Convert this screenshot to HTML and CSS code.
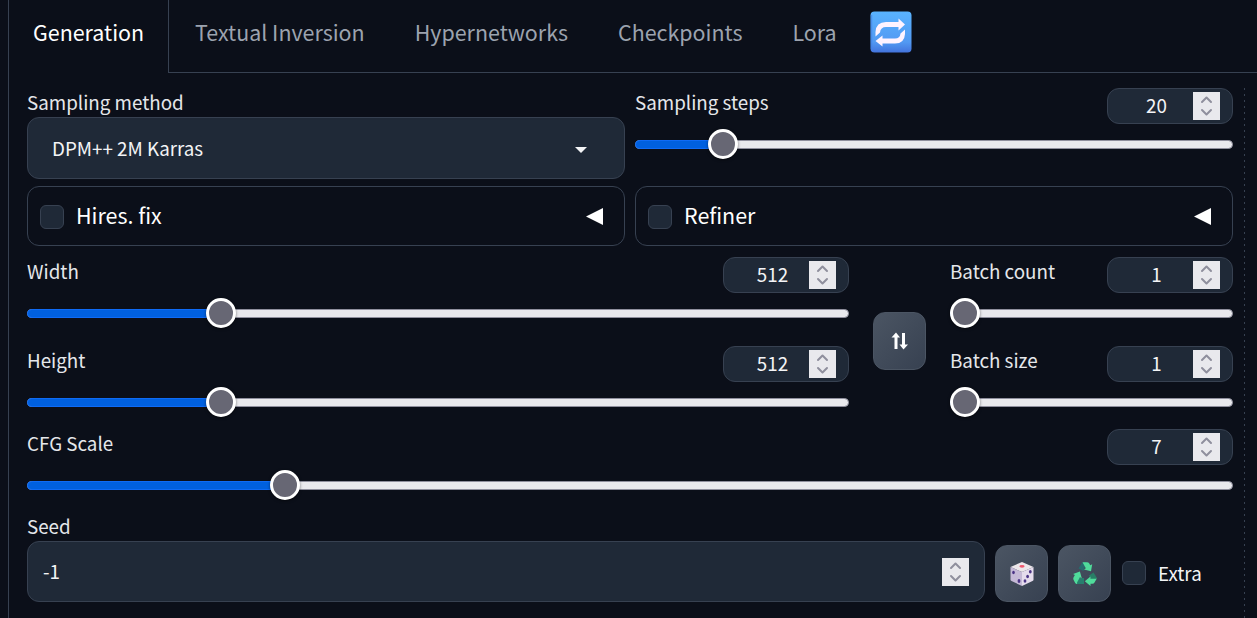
FILE: index.html
```
<!DOCTYPE html>
<html lang="en">
<head>
<meta charset="utf-8">
<title>Generation</title>
<link rel="stylesheet" href="styles.css">
</head>
<body>
<svg class="defs" width="0" height="0">
  <symbol id="spin" viewBox="0 0 27 28">
    <path d="M9 10l4.500-4.500L18 10M9 18l4.500 4.500L18 18" fill="none" stroke="#8f8f9d" stroke-width="2" stroke-linecap="round" stroke-linejoin="round"/>
  </symbol>
</svg>
<main class="page">
  <nav class="tabs">
    <span class="tab active">Generation</span>
    <div class="tab-rest">
      <span class="tab">Textual Inversion</span>
      <span class="tab">Hypernetworks</span>
      <span class="tab">Checkpoints</span>
      <span class="tab">Lora</span>
      <svg class="refresh" viewBox="0 0 42 42">
        <defs><linearGradient id="rb" x1="0" y1="0" x2="0" y2="1"><stop offset="0" stop-color="#59b3ff"/><stop offset=".75" stop-color="#5299f2"/><stop offset="1" stop-color="#4373dd"/></linearGradient></defs>
        <rect x=".5" y=".5" width="41" height="41" rx="4" fill="url(#rb)"/>
        <path d="M1.500 4v34" stroke="#4280e4" stroke-width="1.500" opacity=".6"/>
        <path d="M5.500 25.500V21Q6 11 16 11H28.500V7.500L35 13.500L28.500 19.500V16H16Q10.500 16 10 21.500Z" fill="#fff3ff"/>
        <path d="M35 18.500V23Q34.500 32.500 25 32.500H12.500V35.500L5.500 30L12.500 24.500V27.500H25Q30 27.500 30.500 22.500Z" fill="#fff3ff"/>
      </svg>
    </div>
  </nav>

  <div class="panel">
    <section class="settings">
      <div class="pair">
        <div class="field">
          <label class="label">Sampling method</label>
          <div class="select">
            <span>DPM++ 2M Karras</span>
            <svg class="caret" viewBox="0 0 12 6"><path d="M0 0h12l-6 6z" fill="#f3f4f6"/></svg>
          </div>
        </div>
        <div class="slider" style="--v:.1285">
          <div class="head"><label class="label">Sampling steps</label><div class="num"><span>20</span><svg class="spin"><use href="#spin"/></svg></div></div>
          <div class="track"><i class="fill"></i><i class="thumb"></i></div>
        </div>
      </div>

      <div class="pair accordions">
        <div class="accordion"><i class="check"></i><span>Hires. fix</span><svg class="arrow" viewBox="0 0 17 17"><path d="M17 0v17L0 8.500z" fill="#fff"/></svg></div>
        <div class="accordion"><i class="check"></i><span>Refiner</span><svg class="arrow" viewBox="0 0 17 17"><path d="M17 0v17L0 8.500z" fill="#fff"/></svg></div>
      </div>

      <div class="sizes">
        <div class="stack">
          <div class="slider" style="--v:.2258">
            <div class="head"><label class="label">Width</label><div class="num"><span>512</span><svg class="spin"><use href="#spin"/></svg></div></div>
            <div class="track"><i class="fill"></i><i class="thumb"></i></div>
          </div>
          <div class="slider" style="--v:.2258">
            <div class="head"><label class="label">Height</label><div class="num"><span>512</span><svg class="spin"><use href="#spin"/></svg></div></div>
            <div class="track"><i class="fill"></i><i class="thumb"></i></div>
          </div>
        </div>
        <button class="tool swap"><svg width="18" height="18" viewBox="0 0 18 18"><path d="M5 17V3M12.500 1v14" stroke="#fff" stroke-width="3"/><path d="M.5 5.500L5 .5l4 5zM8.500 12.500l4 5 4.500-5z" fill="#fff"/></svg></button>
        <div class="stack">
          <div class="slider" style="--v:0">
            <div class="head"><label class="label">Batch count</label><div class="num"><span>1</span><svg class="spin"><use href="#spin"/></svg></div></div>
            <div class="track"><i class="fill"></i><i class="thumb"></i></div>
          </div>
          <div class="slider" style="--v:0">
            <div class="head"><label class="label">Batch size</label><div class="num"><span>1</span><svg class="spin"><use href="#spin"/></svg></div></div>
            <div class="track"><i class="fill"></i><i class="thumb"></i></div>
          </div>
        </div>
      </div>

      <div class="slider cfg" style="--v:.2069">
        <div class="head"><label class="label">CFG Scale</label><div class="num"><span>7</span><svg class="spin"><use href="#spin"/></svg></div></div>
        <div class="track"><i class="fill"></i><i class="thumb"></i></div>
      </div>

      <div class="seed-row">
        <div class="field seed">
          <label class="label">Seed</label>
          <div class="seed-input"><span>-1</span><svg class="spin"><use href="#spin"/></svg></div>
        </div>
        <button class="tool">
          <svg width="24" height="24" viewBox="0 0 24 24">
            <path d="M12 0L23.500 5 12 10 .5 5z" fill="#ece7ea"/>
            <path d="M.5 5L12 10v14L1.500 19Q.5 18.500.5 17.500z" fill="#c5b9d6"/>
            <path d="M23.500 5L12 10v14l10.500-5q1-.5 1-1.500z" fill="#e5dcec"/>
            <ellipse cx="12" cy="4.300" rx="2.600" ry="1.400" fill="#f0596f"/>
            <g fill="#4b3485"><ellipse cx="3.500" cy="10.500" rx="1.300" ry="1.800"/><ellipse cx="9" cy="19" rx="1.400" ry="1.900"/><ellipse cx="20.300" cy="9.800" rx="1.400" ry="1.800"/><ellipse cx="17.600" cy="14.500" rx="1.400" ry="1.800"/><ellipse cx="15" cy="19" rx="1.400" ry="1.800"/></g>
          </svg>
        </button>
        <button class="tool">
          <svg width="24" height="24" viewBox="0 0 24 24">
            <path d="M5.500 6.500L8.500 1.500Q9.500 0 11 0H13.500L10.500 9z" fill="#276c6e"/>
            <path d="M9.500.3H14Q15.500.3 16.300 1.600L17.200 3.200 19.200 2.200 18 9.300 11 7.500 12.800 6.300z" fill="#50dc9b"/>
            <path d="M16 13.500L20.500 10.500 23.500 15.300Q24 16.500 23 17.500L18.500 18z" fill="#287f66"/>
            <path d="M23.800 16.500L21.500 20.500Q20.800 21.800 19.500 21.800H17.500V24L11.800 19.200 17.500 14.500V16.800H21.500Q23.300 16.800 23.800 16.500z" fill="#50dc9b"/>
            <path d="M4.500 16H11v6H4.500Q3 22 2.500 20.500z" fill="#287f6e"/>
            <path d="M.4 17.500Q0 16.500.6 15.200L1.900 12.900.1 11.900 6.900 9.400 8.800 16.300 6.900 15.200 4.300 20Q3.700 21 4.200 22 2.800 22 2.200 21z" fill="#50dc9b"/>
          </svg>
        </button>
        <div class="extra"><i class="check"></i><span>Extra</span></div>
      </div>
    </section>
    <div class="divider"></div>
  </div>
</main>
</body>
</html>
```

FILE: styles.css
```
* { box-sizing: border-box; }
body {
  margin: 0;
  background: #0b0f19;
  color: #f3f4f6;
  font: 18.8px/28px "Noto Sans CJK SC", "Noto Sans", sans-serif;
  overflow: hidden;
}
.defs { display: block; height: 0; }
.page { height: 618px; margin-left: 8px; border-left: 1px solid #374151; display: flex; flex-direction: column; }
.tabs { display: flex; height: 73px; font-size: 21.45px; line-height: 30px; color: #9ca3af; white-space: nowrap; }
.tab.active { width: 160px; padding: 17px 0 0 24px; border-right: 1px solid #374151; color: #fff; height: 73px; }
.tab-rest { flex: 1; display: flex; gap: 50px; padding: 17px 0 0 26px; border-bottom: 1px solid #374151; }
.refresh { width: 42px; height: 42px; margin: -6px 0 0 -17px; }

.panel { flex: 1; display: flex; padding: 15px 12px 0 18px; }
.settings { width: 1206px; display: flex; flex-direction: column; }
.divider { width: 1px; margin-left: 11px; background: repeating-linear-gradient(#374151 0 2px, transparent 2px 6px); }
.label { display: block; height: 29px; line-height: 27px; color: #e5e7eb; white-space: nowrap; }

.pair { display: grid; grid-template-columns: 1fr 1fr; gap: 10px; }
.select { height: 62px; display: flex; align-items: center; justify-content: space-between; padding: 0 37px 0 24px; border: 1px solid #374151; border-radius: 12px; background: #1f2937; }
.caret { width: 12px; height: 6px; margin-top: 3px; }

.head { display: flex; justify-content: space-between; height: 36px; margin-bottom: 16px; }
.num { width: 126px; height: 36px; display: flex; align-items: center; padding: 0 12px; border: 1px solid #374151; border-radius: 12px; background: #1f2937; }
.num span { flex: 1; text-align: center; padding-bottom: 2px; }
.spin { width: 27px; height: 28px; background: #e9e9ed; flex: none; }

.track { position: relative; height: 9px; border: 1px solid #8f8f9d; border-radius: 5px; background: #e9e9ed; }
.fill { position: absolute; left: -1px; top: -1px; height: 9px; width: calc((100% - 28px) * var(--v) + 15px); background: #0060df; border: 1px solid #0f6bf5; border-radius: 5px 0 0 5px; }
.thumb { position: absolute; top: -12px; left: calc((100% - 28px) * var(--v) - 1px); width: 30px; height: 30px; border-radius: 50%; background: #676774; border: 3px solid #fff; box-shadow: 0 1px 3px rgba(0,0,0,.5); }

.accordions { margin-top: 7px; }
.accordion { height: 60px; display: flex; align-items: center; padding: 0 21px 0 12px; border: 1px solid #374151; border-radius: 12px; font-size: 21.45px; color: #fff; }
.accordion span { flex: 1; margin-left: 12px; padding-bottom: 2px; }
.check { width: 24px; height: 24px; border: 1px solid #374151; border-radius: 6px; background: #1f2937; margin-top: 2px; flex: none; }
.arrow { width: 17px; height: 17px; margin: 0 .5px 0 -.5px; }

.sizes { display: grid; grid-template-columns: 822px 53px 283px; gap: 24px; margin-top: 11px; }
.stack { display: flex; flex-direction: column; gap: 28px; }
.tool { width: 53px; height: 57px; padding: 0; display: flex; align-items: center; justify-content: center; border: 1px solid #4b5563; border-radius: 12px; background: linear-gradient(to bottom right, #4b5563, #374151); }
.swap { height: 58px; margin-top: 55px; }
.cfg { margin-top: 22px; }

.seed-row { display: flex; align-items: flex-end; gap: 10px; margin-top: 22px; }
.seed { width: 958px; }
.seed-input { height: 61px; display: flex; align-items: center; justify-content: space-between; padding: 0 15px; border: 1px solid #374151; border-radius: 12px; background: #1f2937; }
.seed-input span { padding-bottom: 1px; }
.extra { display: flex; align-items: center; gap: 12px; height: 57px; margin-left: 1px; }
.extra .check { margin-top: -2px; }
.extra span { padding-bottom: 1px; }
```
